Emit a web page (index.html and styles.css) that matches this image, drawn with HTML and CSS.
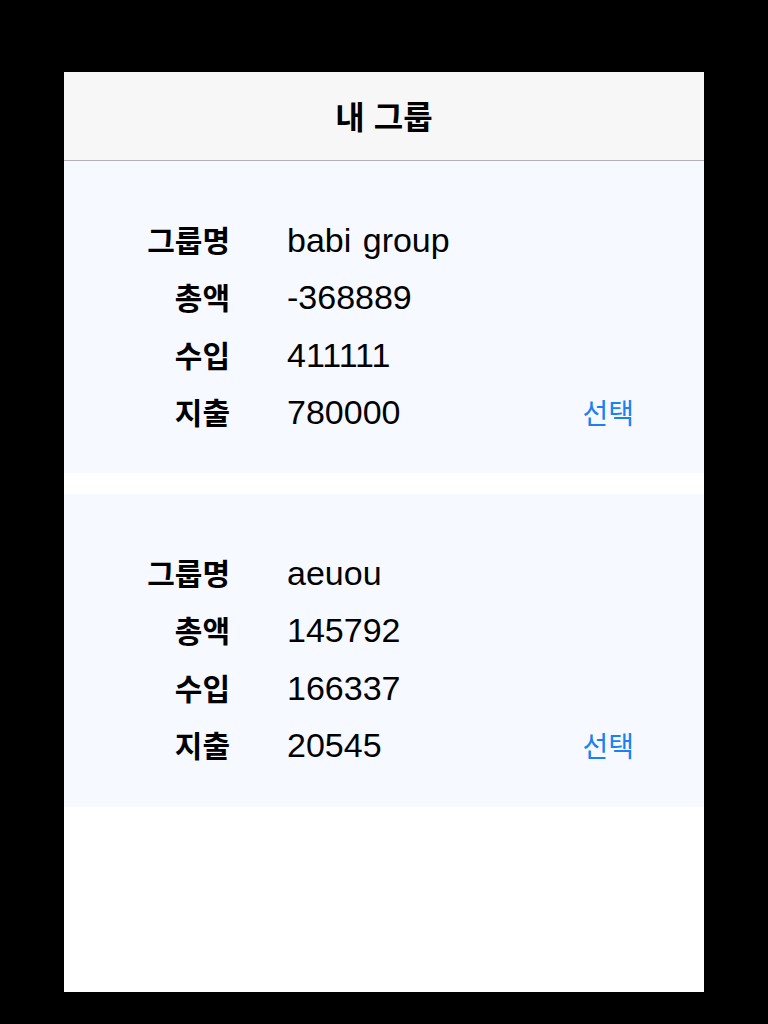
FILE: index.html
```html
<!DOCTYPE html>
<html lang="ko">
<head>
  <meta charset="UTF-8" />
  <meta name="viewport" content="width=device-width, initial-scale=1.0"/>
  <title>내 그룹</title>
  <link rel="stylesheet" href="styles.css">
</head>
<body>

  <div class="screen">
    <div class="nav-bar">
      <h1>내 그룹</h1>
    </div>

    <div class="group-card">
      <div class="row">
        <span class="label">그룹명</span>
        <span class="value">babi group</span>
      </div>
      <div class="row">
        <span class="label">총액</span>
        <span class="value">-368889</span>
      </div>
      <div class="row">
        <span class="label">수입</span>
        <span class="value">411111</span>
      </div>
      <div class="row">
        <span class="label">지출</span>
        <span class="value">780000</span>
        <a href="#" class="select-btn">선택</a>
      </div>
    </div>

    <div class="group-card">
      <div class="row">
        <span class="label">그룹명</span>
        <span class="value">aeuou</span>
      </div>
      <div class="row">
        <span class="label">총액</span>
        <span class="value">145792</span>
      </div>
      <div class="row">
        <span class="label">수입</span>
        <span class="value">166337</span>
      </div>
      <div class="row">
        <span class="label">지출</span>
        <span class="value">20545</span>
        <a href="#" class="select-btn">선택</a>
      </div>
    </div>
  </div>

</body>
</html>
```

FILE: styles.css
```css
* {
  box-sizing: border-box;
  margin: 0;
  padding: 0;
  font-family: "Liberation Sans", "Noto Sans CJK KR", sans-serif;
}

body {
  background: #000;
  color: #000;
  padding: 72px 64px 32px;
}

.screen {
  background: #fff;
  height: 920px;
}

.nav-bar {
  height: 89px;
  background-color: #f7f7f7;
  border-bottom: 1px solid #b2b2b2;
  display: flex;
  align-items: center;
  justify-content: center;
}

.nav-bar h1 {
  font-family: "Noto Sans CJK KR", sans-serif;
  font-size: 32px;
  font-weight: bold;
  line-height: 1;
  margin-top: -3px;
}

.group-card {
  background-color: #f6f9ff;
  height: 312px;
  padding: 50px 70px 0 0;
  margin-bottom: 21px;
}

.group-card + .group-card {
  height: 313px;
}

.row {
  display: grid;
  grid-template-columns: 166px 1fr auto;
  column-gap: 57px;
  align-items: baseline;
  height: 57.4px;
  line-height: 57px;
}

.label {
  font-family: "Noto Sans CJK KR", sans-serif;
  font-size: 30px;
  font-weight: bold;
  text-align: right;
}

.value {
  font-size: 34px;
  word-spacing: 2px;
}

.select-btn {
  font-family: "Noto Sans CJK KR", sans-serif;
  font-size: 28px;
  color: #1a80f6;
  text-decoration: none;
}
```
